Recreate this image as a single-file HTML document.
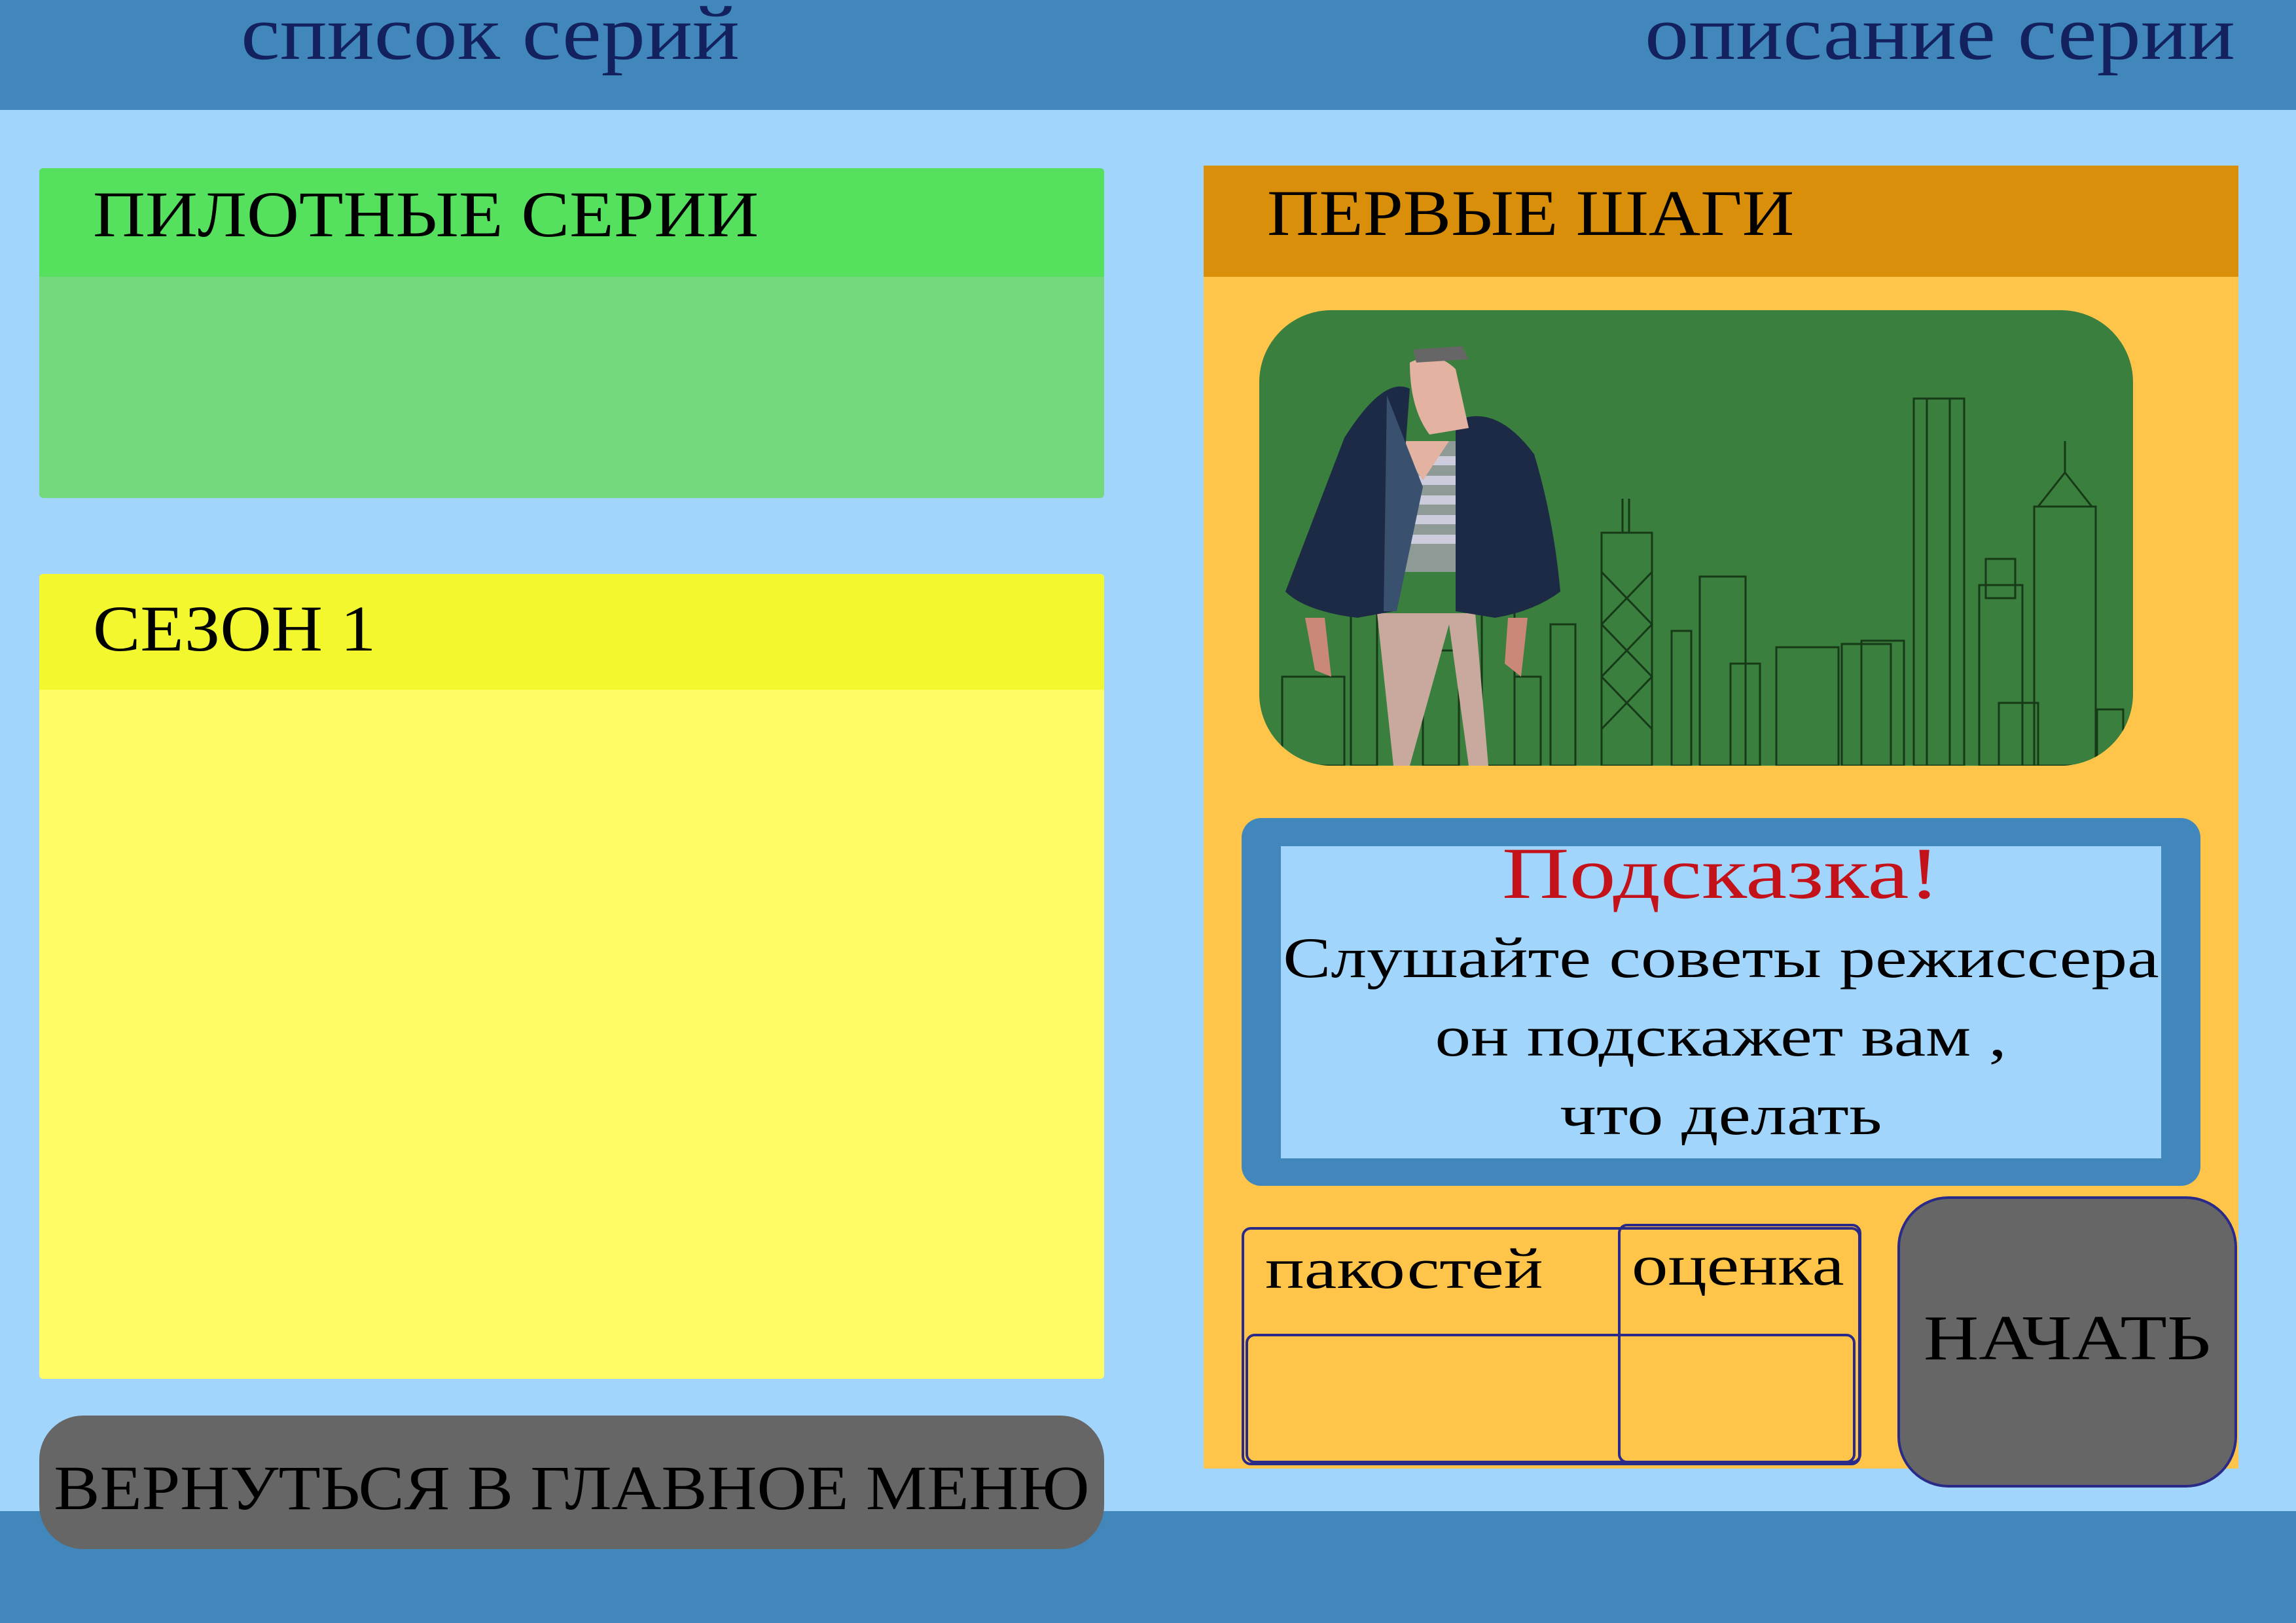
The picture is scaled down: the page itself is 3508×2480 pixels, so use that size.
<!DOCTYPE html>
<html><head><meta charset="utf-8"><style>
body{margin:0;width:3508px;height:2480px;background:#A2D5FB;position:relative;overflow:hidden;font-family:"Liberation Serif","DejaVu Serif",serif}
div{position:absolute;box-sizing:border-box}
.t{white-space:nowrap}
.t span{display:inline-block}
.l span{transform-origin:0 50%}
.c span{transform-origin:50% 50%}
</style></head><body>
<div style="left:0;top:0;width:3508px;height:168px;background:#4187BB"></div>
<div class="t l" style="left:368px;top:-24px;font-size:118px;color:#13225E;line-height:150px"><span style="transform:scaleX(1.14)">список серий</span></div>
<div class="t l" style="left:2513px;top:-24px;font-size:118px;color:#13225E;line-height:150px"><span style="transform:scaleX(1.14)">описание серии</span></div>
<div style="left:0;top:2309px;width:3508px;height:171px;background:#4187BB"></div>

<div style="left:60px;top:257px;width:1627px;height:504px;background:#74D87C;border-radius:6px"></div>
<div style="left:60px;top:257px;width:1627px;height:166px;background:#55E05E;border-radius:6px 6px 0 0"></div>
<div class="t l" style="left:142px;top:258px;font-size:100px;line-height:140px;color:#000"><span style="transform:scaleX(1.107)">ПИЛОТНЫЕ СЕРИИ</span></div>

<div style="left:60px;top:877px;width:1627px;height:1230px;background:#FFFC66;border-radius:6px"></div>
<div style="left:60px;top:877px;width:1627px;height:177px;background:#F2F72E;border-radius:6px 6px 0 0"></div>
<div class="t l" style="left:142px;top:891px;font-size:100px;line-height:140px;color:#000"><span style="transform:scaleX(1.085)">СЕЗОН 1</span></div>

<div style="left:60px;top:2163px;width:1627px;height:204px;background:#666;border-radius:67px"></div>
<div class="t c" style="left:60px;top:2204px;width:1627px;text-align:center;font-size:96px;line-height:140px;color:#000"><span style="transform:scaleX(1.095)">ВЕРНУТЬСЯ В ГЛАВНОЕ МЕНЮ</span></div>

<div style="left:1839px;top:253px;width:1581px;height:1991px;background:#FFC44A"></div>
<div style="left:1839px;top:253px;width:1581px;height:170px;background:#D98F0A"></div>
<div class="t l" style="left:1936px;top:256px;font-size:100px;line-height:140px;color:#000"><span style="transform:scaleX(1.10)">ПЕРВЫЕ ШАГИ</span></div>

<div style="left:1924px;top:474px;width:1335px;height:696px;background:#3A7F3E;border-radius:110px;overflow:hidden">
<svg width="1335" height="696" viewBox="0 0 1335 696" fill="none" stroke="#163a18" stroke-width="3">
<rect x="1000" y="135" width="77" height="561"/><line x1="1020" y1="135" x2="1020" y2="696"/><line x1="1055" y1="135" x2="1055" y2="696"/>
<rect x="1184" y="300" width="94" height="396"/><polygon points="1190,300 1231,248 1272,300"/><line x1="1231" y1="200" x2="1231" y2="248"/>
<rect x="1100" y="420" width="66" height="276"/><rect x="1110" y="380" width="45" height="60"/>
<rect x="523" y="340" width="77" height="356"/><polyline points="523,400 600,480 523,560 600,640"/><polyline points="600,400 523,480 600,560 523,640"/><line x1="555" y1="288" x2="555" y2="340"/><line x1="565" y1="288" x2="565" y2="340"/>
<rect x="673" y="407" width="70" height="289"/><rect x="630" y="490" width="30" height="206"/>
<rect x="790" y="515" width="95" height="181"/><rect x="890" y="510" width="75" height="186"/><rect x="920" y="505" width="65" height="191"/>
<rect x="720" y="540" width="45" height="156"/><rect x="445" y="480" width="38" height="216"/><rect x="390" y="560" width="40" height="136"/>
<rect x="250" y="520" width="55" height="176"/><rect x="340" y="460" width="50" height="236"/><rect x="35" y="560" width="95" height="136"/><rect x="140" y="460" width="40" height="236"/>
<rect x="1280" y="610" width="40" height="86"/><rect x="1130" y="600" width="60" height="96"/>
</svg>
<svg width="1335" height="696" viewBox="0 0 1335 696" style="position:absolute;left:0;top:0">
<path d="M180 463 L330 463 L350 696 L320 696 L290 480 L230 696 L205 696 Z" fill="#C9A89E"/>
<path d="M200 200 L300 200 L300 400 L200 400 Z" fill="#8E9A95"/>
<path d="M200 230h100M200 260h100M200 290h100M200 320h100M200 350h100" stroke="#ccd" stroke-width="14"/>
<path d="M210 200 L250 260 L290 200 Z" fill="#E3B2A1"/>
<path d="M130 195 Q190 100 230 120 L205 460 L150 470 Q70 460 40 430 Z" fill="#1C2A45"/>
<path d="M300 170 Q360 140 420 220 Q450 320 460 430 Q420 460 360 470 L300 460 Z" fill="#1C2A45"/>
<path d="M195 130 L250 270 L210 460 L190 460 Z" fill="#39506f"/>
<path d="M230 80 Q270 60 300 90 L320 180 L260 190 Q230 150 230 80 Z" fill="#E3B2A1"/>
<path d="M235 60 L310 55 L320 75 L240 80 Z" fill="#666"/>
<path d="M70 470 L100 470 L110 560 L85 550 Z M380 470 L410 470 L400 560 L375 540 Z" fill="#c98878"/>
</svg>
</div>

<div style="left:1897px;top:1250px;width:1465px;height:562px;background:#4187BB;border-radius:30px"></div>
<div style="left:1957px;top:1293px;width:1345px;height:477px;background:#A2D5FB"></div>
<div class="t c" style="left:1897px;top:1265px;width:1465px;text-align:center;font-size:112px;line-height:140px;color:#C4121B"><span style="transform:scaleX(1.27)">Подсказка!</span></div>
<div class="t c" style="left:1897px;top:1405px;width:1465px;text-align:center;font-size:88px;line-height:120px;color:#000"><span style="transform:scaleX(1.245)">Слушайте советы режиссера</span><br><span style="transform:scaleX(1.24)">он подскажет вам ,</span><br><span style="transform:scaleX(1.26)">что делать</span></div>

<div style="left:1897px;top:1875px;width:946px;height:364px;border:4px solid #2a2a88;border-radius:14px"></div>
<div style="left:1903px;top:2038px;width:932px;height:198px;border:4px solid #2a2a88;border-radius:14px"></div>
<div style="left:2472px;top:1870px;width:372px;height:366px;border:4px solid #2a2a88;border-radius:14px"></div>
<div class="t l" style="left:1933px;top:1880px;font-size:88px;line-height:120px;color:#000"><span style="transform:scaleX(1.27)">пакостей</span></div>
<div class="t l" style="left:2493px;top:1875px;font-size:88px;line-height:120px;color:#000"><span style="transform:scaleX(1.26)">оценка</span></div>

<div style="left:2899px;top:1828px;width:519px;height:445px;background:#666;border:4px solid #2a2a88;border-radius:78px"></div>
<div class="t c" style="left:2899px;top:1975px;width:519px;text-align:center;font-size:98px;line-height:140px;color:#000"><span style="transform:scaleX(1.19)">НАЧАТЬ</span></div>
</body></html>
